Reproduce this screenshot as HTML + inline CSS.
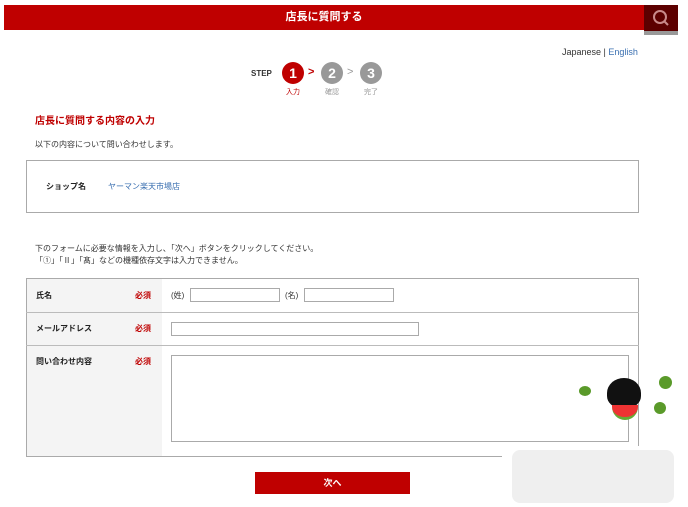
<!DOCTYPE html><html><head><meta charset="utf-8"><style>
body{margin:0;width:688px;height:507px;background:#fff;font-family:"Liberation Sans","Noto Sans CJK JP",sans-serif;position:relative;overflow:hidden;font-size:9px;color:#333}
.a{position:absolute}
.hdr{left:4px;top:5px;width:640px;height:25px;background:#bf0000;color:#fff;font-weight:bold;font-size:11px;text-align:center;line-height:25px}
.srch{left:644px;top:5px;width:34px;height:30px;background:#5c0000;border-bottom:4px solid #999;box-sizing:border-box}
.c{width:22px;height:22px;border-radius:50%;color:#fff;font-weight:bold;font-size:14px;text-align:center;line-height:22px}
.inp{position:absolute;border:1px solid #aaa;background:#fff;box-sizing:border-box}
.req{color:#bf0000;font-weight:bold;font-size:8px}
.lb{font-weight:bold;font-size:9px;color:#222}
</style></head><body>
<div class="a hdr">店長に質問する</div>
<div class="a srch"><svg width="34" height="26"><circle cx="16" cy="12" r="6" fill="none" stroke="#c98a8a" stroke-width="2"/><line x1="20" y1="16" x2="24" y2="20" stroke="#c98a8a" stroke-width="2"/></svg></div>
<div class="a" style="left:562px;top:47px;font-size:9px;color:#333">Japanese | <span style="color:#3a6fb0">English</span></div>
<div class="a" style="left:251px;top:69px;font-weight:bold;font-size:8px">STEP</div>
<div class="a c" style="left:282px;top:62px;background:#bf0000">1</div>
<div class="a" style="left:308px;top:66px;color:#bf0000;font-weight:bold;font-size:11px;line-height:12px">&gt;</div>
<div class="a c" style="left:321px;top:62px;background:#999">2</div>
<div class="a" style="left:347px;top:66px;color:#999;font-size:11px;line-height:12px">&gt;</div>
<div class="a c" style="left:360px;top:62px;background:#999">3</div>
<div class="a" style="left:286px;top:87px;color:#bf0000;font-size:7px">入力</div>
<div class="a" style="left:325px;top:87px;color:#999;font-size:7px">確認</div>
<div class="a" style="left:364px;top:87px;color:#999;font-size:7px">完了</div>
<div class="a" style="left:35px;top:112px;color:#bf0000;font-weight:bold;font-size:10px">店長に質問する内容の入力</div>
<div class="a" style="left:35px;top:139px;font-size:8px">以下の内容について問い合わせします。</div>
<div class="a" style="left:26px;top:160px;width:613px;height:53px;border:1px solid #aaa;box-sizing:border-box"></div>
<div class="a lb" style="left:46px;top:181px;font-size:8px">ショップ名</div>
<div class="a" style="left:108px;top:181px;color:#3a6fb0;font-size:8px">ヤーマン楽天市場店</div>
<div class="a" style="left:35px;top:243px;font-size:8px;line-height:12px">下のフォームに必要な情報を入力し、「次へ」ボタンをクリックしてください。<br>「①」「Ⅱ」「髙」などの機種依存文字は入力できません。</div>
<div class="a" style="left:26px;top:278px;width:613px;height:179px;border:1px solid #aaa;box-sizing:border-box"></div>
<div class="a" style="left:27px;top:279px;width:135px;height:177px;background:#f4f4f4"></div>
<div class="a" style="left:26px;top:312px;width:613px;height:1px;background:#bbb"></div>
<div class="a" style="left:26px;top:345px;width:613px;height:1px;background:#bbb"></div>
<div class="a lb" style="left:36px;top:290px;font-size:8px">氏名</div>
<div class="a req" style="left:135px;top:290px">必須</div>
<div class="a" style="left:171px;top:290px;font-size:8px">(姓)</div>
<div class="inp" style="left:190px;top:288px;width:90px;height:14px"></div>
<div class="a" style="left:285px;top:290px;font-size:8px">(名)</div>
<div class="inp" style="left:304px;top:288px;width:90px;height:14px"></div>
<div class="a lb" style="left:36px;top:323px;font-size:8px">メールアドレス</div>
<div class="a req" style="left:135px;top:323px">必須</div>
<div class="inp" style="left:171px;top:322px;width:248px;height:14px"></div>
<div class="a lb" style="left:36px;top:356px;font-size:8px">問い合わせ内容</div>
<div class="a req" style="left:135px;top:356px">必須</div>
<div class="inp" style="left:171px;top:355px;width:458px;height:87px"></div>
<div class="a" style="left:255px;top:472px;width:155px;height:22px;background:#bf0000;color:#fff;font-weight:bold;font-size:9px;text-align:center;line-height:22px">次へ</div>
<div class="a" style="left:502px;top:446px;width:180px;height:61px;background:#fff"></div>
<div class="a" style="left:512px;top:450px;width:162px;height:53px;background:#efefef;border-radius:8px"></div>
<div class="a" style="left:607px;top:378px;width:34px;height:30px;background:#111;border-radius:50% 50% 40% 40%"></div>
<div class="a" style="left:612px;top:405px;width:26px;height:12px;background:#e33;border-radius:0 0 14px 14px;border-bottom:3px solid #6a3"></div>
<div class="a" style="left:579px;top:386px;width:12px;height:10px;background:#5a9a2a;border-radius:50%"></div>
<div class="a" style="left:659px;top:376px;width:13px;height:13px;background:#5a9a2a;border-radius:50%"></div>
<div class="a" style="left:654px;top:402px;width:12px;height:12px;background:#5a9a2a;border-radius:50%"></div>
</body></html>
